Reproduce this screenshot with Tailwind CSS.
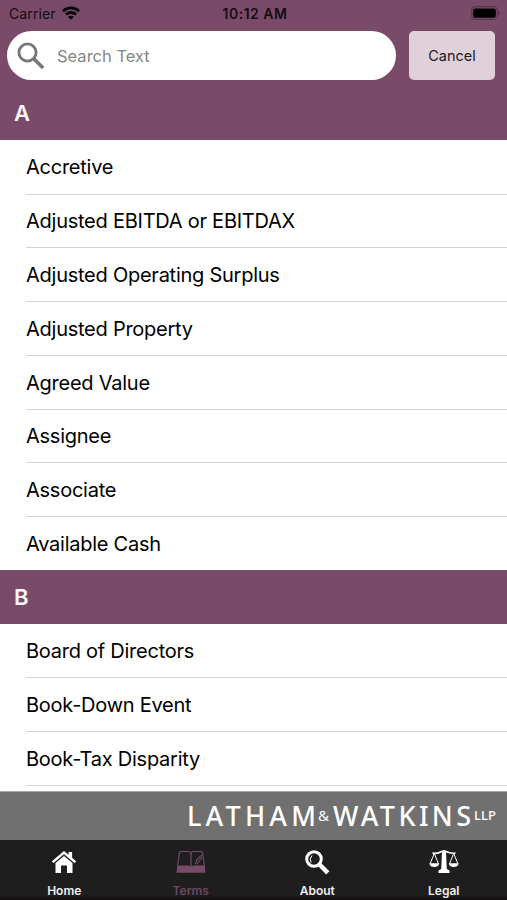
<!DOCTYPE html>
<html lang="en">
<head>
    <meta charset="UTF-8">
    <meta name="viewport" content="width=device-width, initial-scale=1.0">
    <title>Terms</title>
    <script src="https://cdn.jsdelivr.net/npm/@tailwindcss/browser@4"></script>
</head>
<body class="bg-white">
    <div class="w-[507px] h-[900px] flex flex-col overflow-hidden font-['Inter','Liberation_Sans',sans-serif] text-black">
        <header class="h-[86px] shrink-0 bg-[#794b69]">
            <!-- Status bar -->
            <div class="h-[31px] pb-1 pl-[9px] pr-1.5 grid grid-cols-3 items-center text-[14px] leading-5 text-[#160b14]">
                <div class="flex items-center gap-[6px]">
                    <span class="tracking-[0.1px]">Carrier</span>
                    <svg class="w-[18px] h-[14px] mt-[-2px]" viewBox="0 0 18 14" fill="none" stroke="#08040a" stroke-width="2.8">
                        <path d="M.9 5.2C5.5.7 12.5.7 17.1 5.2"/>
                        <path d="M3.9 8.6C6.8 5.8 11.2 5.8 14.1 8.6"/>
                        <path d="M9 13.6 6 10.9C7.7 9.4 10.3 9.4 12 10.9Z" fill="#08040a" stroke="none"/>
                    </svg>
                </div>
                <span class="text-center font-semibold tracking-[0.5px]">10:12 AM</span>
                <svg class="w-[30px] h-[14px] justify-self-end mt-[-1px]" viewBox="0 0 30 14">
                    <rect x=".7" y=".7" width="25.6" height="12.6" rx="3.6" fill="none" stroke="#5b354e" stroke-width="1.2"/>
                    <rect x="2.2" y="2.4" width="22.6" height="9.4" rx="2" fill="#000"/>
                    <path d="M27.4 5v4c1.8-.7 1.8-3.3 0-4Z" fill="#5b354e"/>
                </svg>
            </div>
            <!-- Search -->
            <div class="flex pl-[7px] gap-[13px]">
                <div class="w-[389px] h-[49px] rounded-full bg-white flex items-center pl-2.5 gap-3">
                    <svg class="w-7 h-7" viewBox="0 0 28 28" fill="none" stroke="#777" stroke-width="2.9">
                        <circle cx="10.5" cy="10.5" r="8.6"/>
                        <path d="m16.8 16.8 9.3 9.3" stroke-width="3.5"/>
                    </svg>
                    <span class="pt-0.5 text-[16.5px] text-[#858585]">Search Text</span>
                </div>
                <button class="w-[86px] h-[49px] pt-px rounded-[5px] bg-[#dfd0da] text-[14.5px] text-[#211a20]">Cancel</button>
            </div>
        </header>

        <main id="terms" class="flex-1 min-h-0 overflow-hidden text-[20px] tracking-[-0.25px]"></main>

        <!-- Firm banner -->
        <div class="h-[49px] shrink-0 bg-[#707070] border-t border-[#a8a8a8]">
            <svg class="w-[507px] h-12" viewBox="0 0 507 48" fill="#fff" font-family="'Noto Sans', sans-serif">
                <text x="187" y="33.5" font-size="27" font-weight="500" textLength="129">LATHAM</text>
                <text x="318" y="29" font-size="15" textLength="12">&amp;</text>
                <text x="333" y="33.5" font-size="27" font-weight="500" textLength="138">WATKINS</text>
                <text x="474" y="28" font-size="13" font-weight="500" textLength="22">LLP</text>
            </svg>
        </div>

        <!-- Tab bar -->
        <nav class="h-[60px] shrink-0 bg-linear-to-b from-[#1e1e1e] from-92% to-[#100b0f] grid grid-cols-4 pt-2 pl-px font-semibold text-[12px] leading-4 text-[#eee]">
            <div class="flex flex-col items-center gap-[7px]">
                <svg class="w-[26px] h-7" viewBox="0 0 26 28" fill="#fff">
                    <path d="M13 3 .8 13.2l1.7 1.7L13 6.2l10.5 8.700 1.7-1.7-4.1-3.5V4h-3.5v2.8Z"/>
                    <path d="m13 8-8.500 7v10H10v-7.500h6V25h5.500V15Z"/>
                </svg>
                <span>Home</span>
            </div>
            <div class="flex flex-col items-center gap-[7px] text-[#704660]">
                <svg class="w-[30px] h-7" viewBox="0 0 30 28" fill="none" stroke="#794b69" stroke-width="1.1">
                    <path d="M1.500 18.500 3.500 4.500Q4 3.500 5.500 3.500H12Q14.500 3.500 15 5Q15.500 3.500 18 3.500H24.500Q26 3.500 26.500 4.500L28.500 18.500"/>
                    <path d="M15 5v13"/>
                    <path d="m19.500 16 1-4 5.500-5M21 16l5-7"/>
                    <path d="M1.300 17.500H12l3 .8 3-.8h10.700l.8 7.300H.5Z" fill="#794b69" stroke="none"/>
                </svg>
                <span>Terms</span>
            </div>
            <div class="flex flex-col items-center gap-[7px]">
                <svg class="w-[26px] h-7" viewBox="0 0 26 28" fill="none" stroke="#fff">
                    <circle cx="10" cy="11" r="7.300" stroke-width="3"/>
                    <path d="m15.500 16.500 8.300 8.300" stroke-width="4.500"/>
                    <path d="M7.200 14.500Q4.800 11 8 7.500" stroke-width="1"/>
                </svg>
                <span>About</span>
            </div>
            <div class="flex flex-col items-center gap-[7px]">
                <svg class="w-[30px] h-7" viewBox="0 0 30 28" fill="none" stroke="#fff">
                    <path d="M3.500 5.200Q8 5.800 11 4.200T15 2.800T19 4.200T26.500 5.200" stroke-width="1.700"/>
                    <path d="M13 3.500h4l.8 17.500 2.700 1.500V25h-11v-2.500l2.700-1.500Z" fill="#fff" stroke="none"/>
                    <path d="M5.300 5.500 1 16h8.600ZM24.700 5.500 20.400 16H29Z" stroke-width="1"/>
                    <path d="M.3 15.500h10q-1 3.500-5 3.500t-5-3.500ZM19.700 15.500h10q-1 3.500-5 3.500t-5-3.500Z" fill="#fff" stroke="none"/>
                </svg>
                <span>Legal</span>
            </div>
        </nav>
    </div>

    <script>
        const sections = [
            {
                letter: 'A',
                terms: ['Accretive', 'Adjusted EBITDA or EBITDAX', 'Adjusted Operating Surplus', 'Adjusted Property',
                    'Agreed Value', 'Assignee', 'Associate', 'Available Cash']
            },
            {
                letter: 'B',
                terms: ['Board of Directors', 'Book-Down Event', 'Book-Tax Disparity', '']
            }
        ];

        document.getElementById('terms').innerHTML = sections.map(section => `
            <section>
                <h2 class="h-[53.75px] px-3.5 pt-0.5 flex items-center bg-[#794b69] text-[22px] font-semibold text-[#fbf4fa]">${section.letter}</h2>
                <ul class="[&>li+li]:border-t">
                    ${section.terms.map(term => `
                        <li class="h-[53.75px] ml-[26px] pt-px flex items-center border-[#d4d4d4]">${term}</li>
                    `).join('')}
                </ul>
            </section>
        `).join('');
    </script>
</body>
</html>
